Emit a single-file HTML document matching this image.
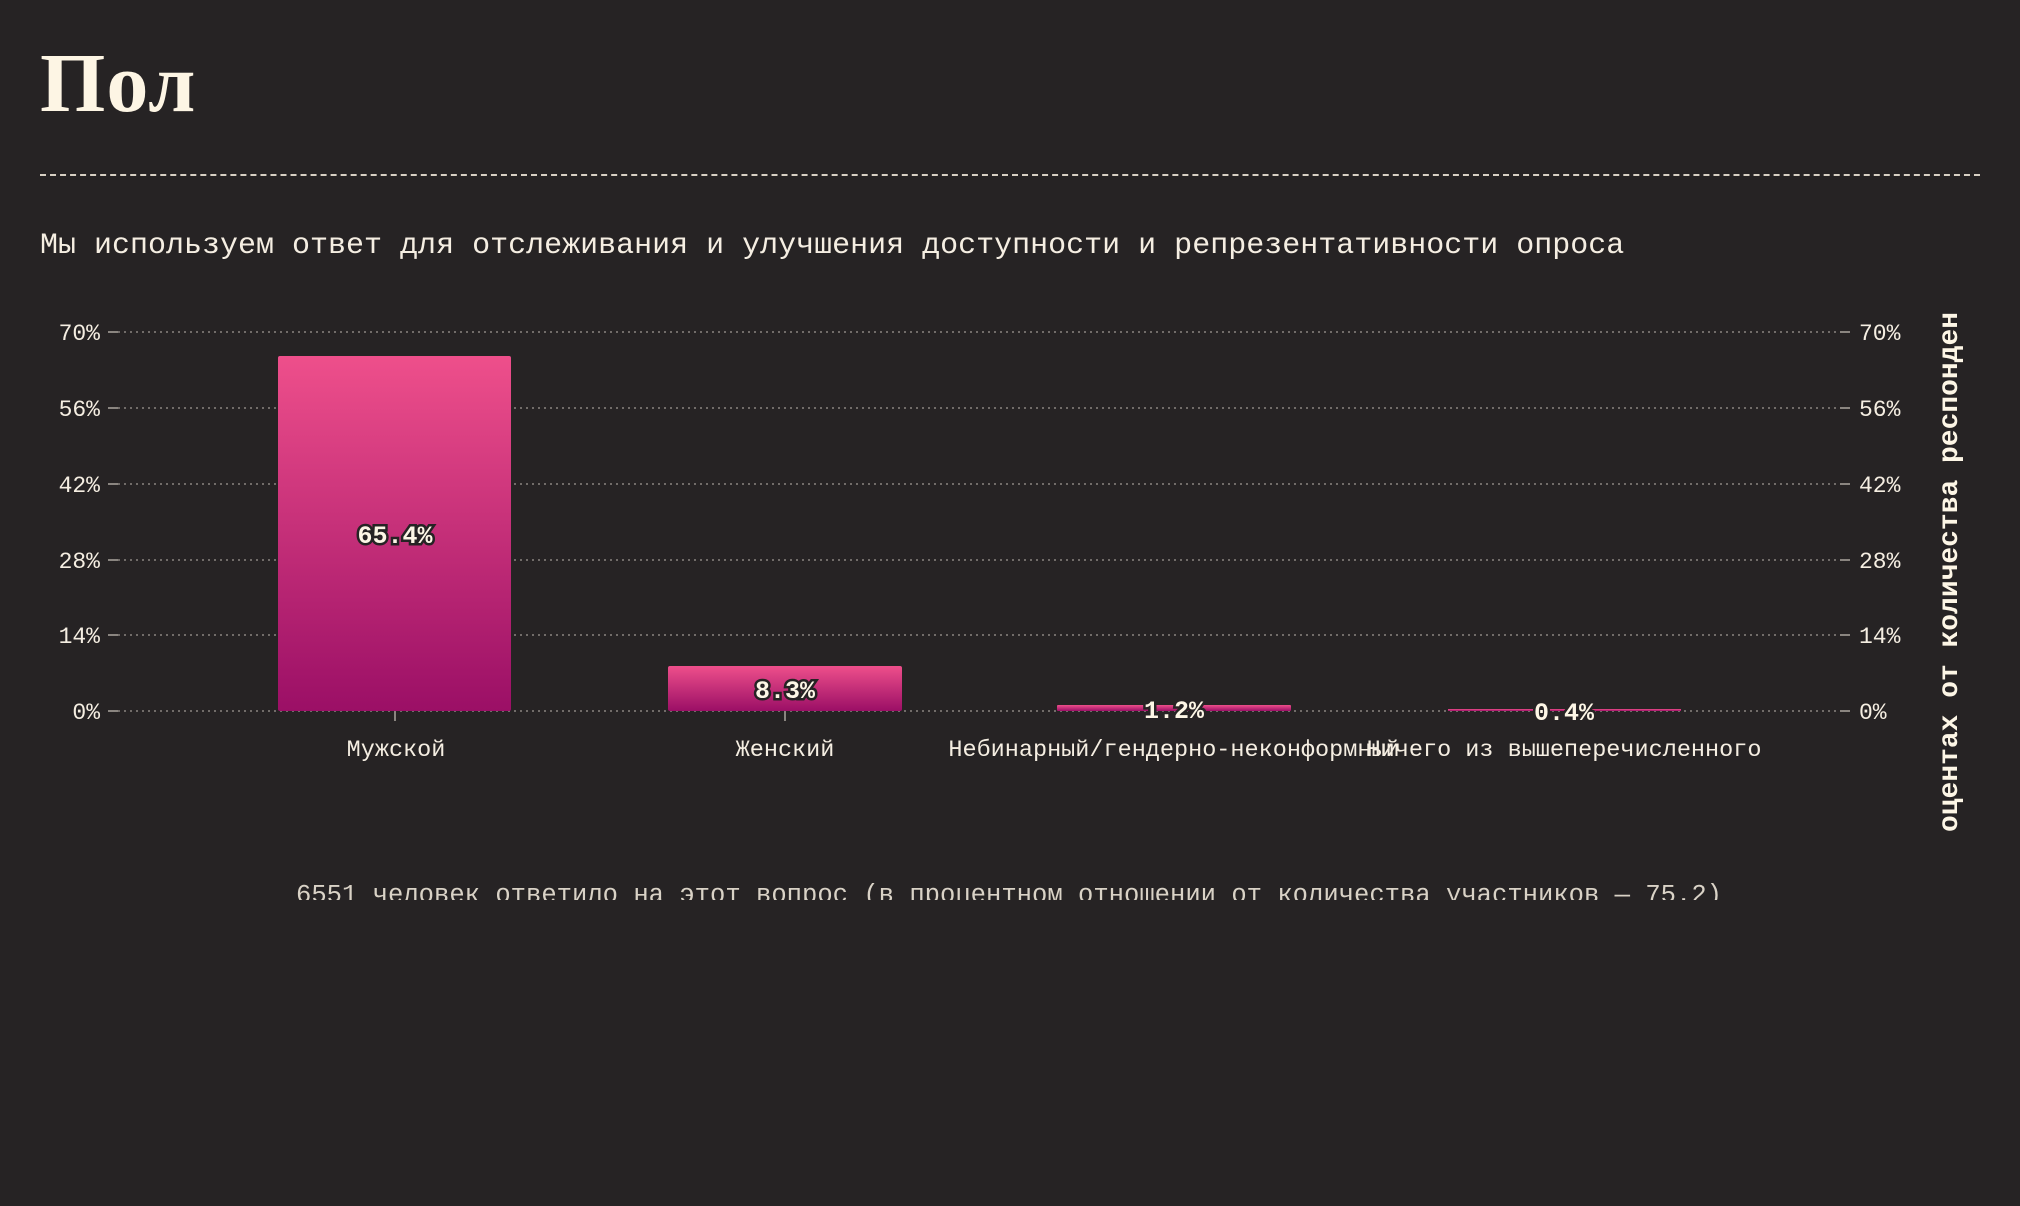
<!DOCTYPE html>
<html><head><meta charset="utf-8"><style>
html,body{margin:0;padding:0;background:#262324;}
body{width:2020px;height:1206px;position:relative;overflow:hidden;color:#fbf3e4;}
.t{position:absolute;left:40px;top:34px;font-family:"Liberation Serif",serif;font-weight:bold;font-size:84px;line-height:100px;color:#fdf5e4;letter-spacing:1px}
.hr{position:absolute;left:40px;top:174px;width:1940px;border-top:2px dashed #d8d0c4;}
.sub{position:absolute;left:40px;top:226px;font-family:"Liberation Mono",monospace;font-size:30px;line-height:40px;color:#f5eee2;white-space:nowrap}
.clip{position:absolute;left:0;top:0;width:2020px;height:900px;overflow:hidden}
</style></head><body>
<div class="t">Пол</div>
<div class="hr"></div>
<div class="sub">Мы используем ответ для отслеживания и улучшения доступности и репрезентативности опроса</div>
<div class="clip">
<svg width="2020" height="902" xmlns="http://www.w3.org/2000/svg" style="position:absolute;left:0;top:0">
<defs>
<linearGradient id="g" x1="0" y1="0" x2="0" y2="1"><stop offset="0" stop-color="#ee4f8b"/><stop offset="1" stop-color="#9b0f66"/></linearGradient>
</defs>
<g stroke="#8a8580" stroke-width="1.5" stroke-dasharray="2 4">
<line x1="118" y1="332" x2="1848" y2="332"/><line x1="118" y1="408" x2="1848" y2="408"/><line x1="118" y1="484" x2="1848" y2="484"/><line x1="118" y1="560" x2="1848" y2="560"/><line x1="118" y1="635" x2="1848" y2="635"/><line x1="118" y1="711" x2="1848" y2="711"/>
</g>
<g stroke="#8a8580" stroke-width="2">
<line x1="108" y1="332" x2="118" y2="332"/><line x1="108" y1="408" x2="118" y2="408"/><line x1="108" y1="484" x2="118" y2="484"/><line x1="108" y1="560" x2="118" y2="560"/><line x1="108" y1="635" x2="118" y2="635"/><line x1="108" y1="711" x2="118" y2="711"/>
<line x1="1840" y1="332" x2="1850" y2="332"/><line x1="1840" y1="408" x2="1850" y2="408"/><line x1="1840" y1="484" x2="1850" y2="484"/><line x1="1840" y1="560" x2="1850" y2="560"/><line x1="1840" y1="635" x2="1850" y2="635"/><line x1="1840" y1="711" x2="1850" y2="711"/>
<line x1="395" y1="711" x2="395" y2="721"/><line x1="785" y1="711" x2="785" y2="721"/>
</g>
<g font-family="Liberation Mono, monospace" font-size="23" fill="#f5eee2">
<text x="100" y="340" text-anchor="end">70%</text><text x="100" y="416" text-anchor="end">56%</text><text x="100" y="492" text-anchor="end">42%</text><text x="100" y="568" text-anchor="end">28%</text><text x="100" y="643" text-anchor="end">14%</text><text x="100" y="719" text-anchor="end">0%</text>
<text x="1859" y="340">70%</text><text x="1859" y="416">56%</text><text x="1859" y="492">42%</text><text x="1859" y="568">28%</text><text x="1859" y="643">14%</text><text x="1859" y="719">0%</text>
</g>
<rect x="278" y="356" width="233" height="355" rx="2" fill="url(#g)"/>
<rect x="668" y="666" width="234" height="45" rx="2" fill="url(#g)"/>
<rect x="1057" y="705" width="234" height="6" rx="1" fill="url(#g)"/>
<rect x="1448" y="709" width="233" height="2" fill="url(#g)"/>
<g font-family="Liberation Mono, monospace" font-weight="bold" font-size="25" fill="#fdf6e6" stroke="#262324" stroke-width="5" paint-order="stroke" text-anchor="middle">
<text x="395" y="543">65.4%</text><text x="785" y="698">8.3%</text><text x="1174" y="718">1.2%</text><text x="1564" y="720">0.4%</text>
</g>
<g font-family="Liberation Mono, monospace" font-size="23.5" fill="#f5eee2" text-anchor="middle">
<text x="396" y="756">Мужской</text><text x="785" y="756">Женский</text><text x="1174" y="756">Небинарный/гендерно-неконформный</text><text x="1564" y="756">Ничего из вышеперечисленного</text>
</g>
<text x="296" y="902" font-family="Liberation Mono, monospace" font-size="25.5" fill="#d9d2c6" textLength="1426" lengthAdjust="spacingAndGlyphs">6551 человек ответило на этот вопрос (в процентном отношении от количества участников — 75.2)</text>
<text transform="translate(1957,832) rotate(-90)" font-family="Liberation Mono, monospace" font-weight="bold" font-size="27.5" fill="#fdf6e6" textLength="520" lengthAdjust="spacingAndGlyphs">оцентах от количества респонден</text>
</svg>
</div>
</body></html>
